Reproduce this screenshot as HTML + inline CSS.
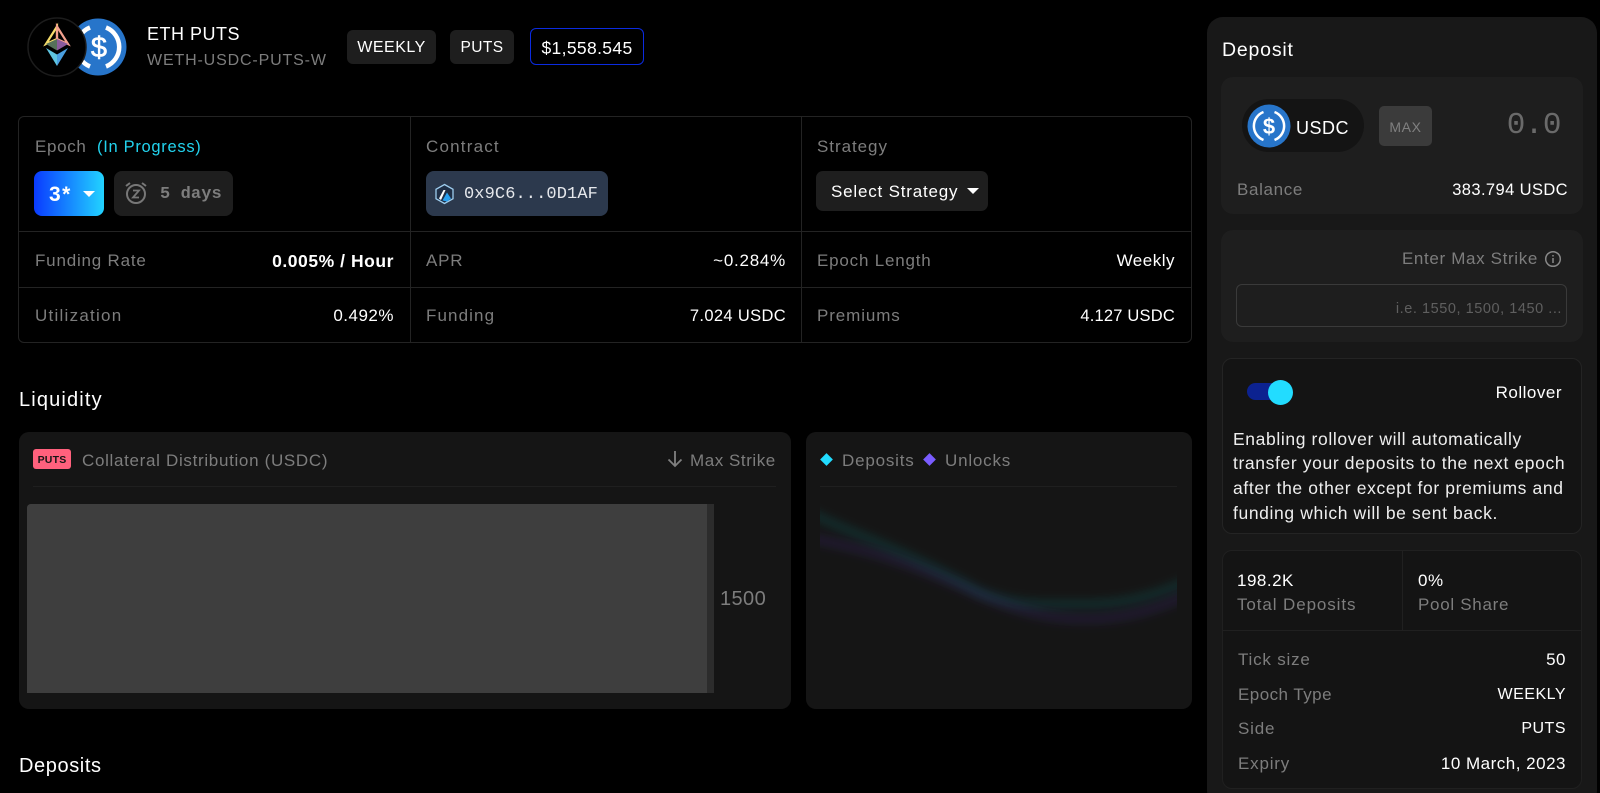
<!DOCTYPE html>
<html><head><meta charset="utf-8"><style>
*{box-sizing:border-box}
html,body{margin:0;padding:0;background:#000;width:1600px;height:793px;overflow:hidden}
body{position:relative;font-family:"Liberation Sans",sans-serif;color:#fff}
.t{position:absolute;white-space:nowrap;line-height:20px;height:20px;margin-top:-9px;font-size:17px;letter-spacing:.5px}
.g{color:#7d7d7d;font-size:17px;letter-spacing:.8px}
.u{font-size:16px;letter-spacing:.5px}
.r{text-align:right}
.b{position:absolute}
.m{font-family:"Liberation Mono",monospace}
</style></head><body>

<!-- header -->
<svg class="b" style="left:25px;top:15px" width="104" height="64" viewBox="0 0 104 64">
<circle cx="73" cy="32" r="28.5" fill="#2775ca"/>
<path d="M65 12.500A21 21 0 0 0 65 51.500" fill="none" stroke="#fff" stroke-width="4.500"/>
<path d="M81 12.500A21 21 0 0 1 81 51.500" fill="none" stroke="#fff" stroke-width="4.500"/>
<text x="74" y="42" font-family="Liberation Sans" font-size="29" fill="#fff" stroke="#fff" stroke-width=".6" text-anchor="middle">$</text>
<circle cx="32" cy="32" r="29" fill="#000" stroke="#1c1c1c" stroke-width="1.5"/>
<path d="M32 11.500L21 29L32 24Z" fill="none" stroke="#f5dc6a" stroke-width="2.200"/>
<path d="M32 11.500L43 29L32 24Z" fill="none" stroke="#f2a08e" stroke-width="2.200"/>
<path d="M32 24L43 29L32 35.500Z" fill="#8a5a9c"/>
<path d="M32 24L21 29L32 35.500Z" fill="#55705a"/>
<path d="M21 33L32 39.500L32 51Z" fill="#5ec5e0"/>
<path d="M43 33L32 39.500L32 51Z" fill="#4a9fe0"/>
</svg>
<div class="t" style="left:147px;top:33px;font-size:18px;letter-spacing:.5px">ETH PUTS</div>
<div class="t g" style="left:147px;top:60px;font-size:16px;letter-spacing:.85px">WETH-USDC-PUTS-W</div>
<div class="b" style="left:347px;top:30px;width:89px;height:34px;background:#1e1e1e;border-radius:6px"></div>
<div class="t" style="left:347px;width:89px;text-align:center;top:46.500px;font-size:16px;letter-spacing:.5px">WEEKLY</div>
<div class="b" style="left:450px;top:30px;width:64px;height:34px;background:#1e1e1e;border-radius:6px"></div>
<div class="t" style="left:450px;width:64px;text-align:center;top:46.500px;font-size:15.500px;letter-spacing:.4px">PUTS</div>
<div class="b" style="left:530px;top:28px;width:114px;height:37px;border:1.500px solid #0b2be0;border-radius:6px"></div>
<div class="t" style="left:530px;width:114px;text-align:center;top:46.500px;font-size:17.500px;letter-spacing:.35px">$1,558.545</div>

<!-- stats table -->
<div class="b" style="left:18px;top:116px;width:1174px;height:227px;border:1px solid #232323;border-radius:6px"></div>
<div class="b" style="left:410px;top:116px;width:1px;height:227px;background:#232323"></div>
<div class="b" style="left:801px;top:116px;width:1px;height:227px;background:#232323"></div>
<div class="b" style="left:18px;top:231px;width:1174px;height:1px;background:#232323"></div>
<div class="b" style="left:18px;top:287px;width:1174px;height:1px;background:#232323"></div>

<div class="t g" style="left:35px;top:146px;letter-spacing:.65px">Epoch</div>
<div class="t" style="left:97px;top:146px;color:#22d3ee;font-size:16.500px;letter-spacing:.7px">(In Progress)</div>
<div class="t g" style="left:426px;top:146px;letter-spacing:1.2px">Contract</div>
<div class="t g" style="left:817px;top:146px;letter-spacing:.95px">Strategy</div>

<div class="b" style="left:34px;top:171px;width:70px;height:45px;border-radius:8px;background:linear-gradient(90deg,#0a3bff,#22d3ff)"></div>
<div class="t" style="left:49px;top:194px;font-size:21px;font-weight:700;letter-spacing:1.5px">3*</div>
<div class="b" style="left:83px;top:191px;width:0;height:0;border-left:6px solid transparent;border-right:6px solid transparent;border-top:6.500px solid #fff"></div>
<div class="b" style="left:114px;top:171px;width:119px;height:45px;border-radius:8px;background:#1e1e1e"></div>
<svg class="b" style="left:124px;top:180px" width="24" height="26" viewBox="0 0 24 26" fill="none" stroke="#777" stroke-width="2">
<circle cx="12" cy="14" r="9"/><path d="M2 6L6 3M22 6L18 3"/><path d="M9 10.500H15L9 17.500H15" stroke-width="1.800"/></svg>
<div class="t m g" style="left:160px;top:194px;font-size:17px;letter-spacing:.1px;font-weight:700">5 days</div>

<div class="b" style="left:426px;top:171px;width:182px;height:45px;border-radius:8px;background:#2c394d"></div>
<svg class="b" style="left:434px;top:183px" width="21" height="22" viewBox="0 0 21 22">
<path d="M10.500 1.500L19 6.300V15.700L10.500 20.500L2 15.700V6.300Z" fill="#1f2f46" stroke="#9dcced" stroke-width="1.300"/>
<path d="M5 15.500L9.500 7H11.500L7 17Z" fill="#fff"/><path d="M8.500 17.500L13 9.500L17 15.500L13 18.500Z" fill="#28a0f0"/></svg>
<div class="t m" style="left:464px;top:194px;font-size:17px;letter-spacing:.1px;color:#e6e8ec">0x9C6...0D1AF</div>

<div class="b" style="left:816px;top:171px;width:172px;height:40px;border-radius:7px;background:#1e1e1e"></div>
<div class="t" style="left:831px;top:191px;font-size:17px;letter-spacing:.8px">Select Strategy</div>
<div class="b" style="left:967px;top:188px;width:0;height:0;border-left:6px solid transparent;border-right:6px solid transparent;border-top:6.500px solid #fff"></div>

<div class="t g" style="left:35px;top:260px">Funding Rate</div>
<div class="t r" style="right:1206px;top:260px;font-weight:700;font-size:17.500px;letter-spacing:.55px">0.005% / Hour</div>
<div class="t g" style="left:426px;top:260px">APR</div>
<div class="t r" style="right:814px;top:260px;letter-spacing:.75px">~0.284%</div>
<div class="t g" style="left:817px;top:260px">Epoch Length</div>
<div class="t r" style="right:425px;top:260px">Weekly</div>
<div class="t g" style="left:35px;top:315px;letter-spacing:1.25px">Utilization</div>
<div class="t r" style="right:1206px;top:315px">0.492%</div>
<div class="t g" style="left:426px;top:315px;letter-spacing:1.1px">Funding</div>
<div class="t r" style="right:814px;top:315px;font-size:16.500px;letter-spacing:.35px">7.024 USDC</div>
<div class="t g" style="left:817px;top:315px;letter-spacing:.9px">Premiums</div>
<div class="t r" style="right:425px;top:315px;font-size:16.500px;letter-spacing:.2px">4.127 USDC</div>

<!-- liquidity -->
<div class="t" style="left:19px;top:399px;font-size:20px;letter-spacing:1.15px">Liquidity</div>
<div class="b" style="left:19px;top:432px;width:772px;height:277px;background:#151515;border-radius:10px"></div>
<div class="b" style="left:33px;top:449px;width:38px;height:20px;background:#ff617d;border-radius:3px"></div>
<div class="t" style="left:33px;width:38px;text-align:center;top:458.500px;font-size:10.500px;font-weight:700;color:#151515;letter-spacing:.2px">PUTS</div>
<div class="t g" style="left:82px;top:460px;letter-spacing:.68px">Collateral Distribution (USDC)</div>
<svg class="b" style="left:666px;top:449px" width="18" height="20" viewBox="0 0 18 20" fill="none" stroke="#808080" stroke-width="1.800"><path d="M9 2V17M2.500 10.500L9 17L15.500 10.500"/></svg>
<div class="t g" style="left:690px;top:460px;letter-spacing:.55px">Max Strike</div>
<div class="b" style="left:33px;top:486px;width:743px;height:1px;background:#1f1f1f"></div>
<div class="b" style="left:27px;top:504px;width:687px;height:189px;background:#2c2c2c;border-radius:4px 0 0 0"></div>
<div class="b" style="left:27px;top:504px;width:680px;height:189px;background:#3e3e3e;border-radius:4px 0 0 0"></div>
<div class="t g" style="left:720px;top:598px;font-size:20px;letter-spacing:.4px">1500</div>

<div class="b" style="left:806px;top:432px;width:386px;height:277px;background:#151515;border-radius:10px"></div>
<div class="b" style="left:821.500px;top:454.500px;width:9px;height:9px;background:#22dcff;transform:rotate(45deg)"></div>
<div class="t g" style="left:842px;top:460px">Deposits</div>
<div class="b" style="left:924.500px;top:454.500px;width:9px;height:9px;background:#7a5cff;transform:rotate(45deg)"></div>
<div class="t g" style="left:945px;top:460px">Unlocks</div>
<div class="b" style="left:820px;top:486px;width:357px;height:1px;background:#1f1f1f"></div>
<svg class="b" style="left:820px;top:495px" width="357" height="140" viewBox="820 495 357 140">
<defs><filter id="bl" x="-10%" y="-30%" width="120%" height="160%"><feGaussianBlur stdDeviation="4.500"/></filter></defs>
<path d="M810 513C850 533 900 548 980 592C1020 607 1040 604 1090 604C1120 604 1150 598 1190 580" fill="none" stroke="#1fe0e0" stroke-opacity=".1" stroke-width="10" filter="url(#bl)"/>
<path d="M810 538C860 548 900 558 980 595C1020 612 1050 619 1085 619C1120 619 1150 612 1190 594" fill="none" stroke="#7a4cff" stroke-opacity=".11" stroke-width="10" filter="url(#bl)"/>
</svg>

<div class="t" style="left:19px;top:765px;font-size:20px;letter-spacing:.6px">Deposits</div>

<!-- right panel -->
<div class="b" style="left:1207px;top:17px;width:390px;height:790px;background:#181818;border-radius:16px"></div>
<div class="t" style="left:1222px;top:49px;font-size:19.500px;letter-spacing:.8px">Deposit</div>
<div class="b" style="left:1221px;top:77px;width:362px;height:137px;background:#1e1e1e;border-radius:12px"></div>
<div class="b" style="left:1242px;top:99px;width:122px;height:53px;background:#141414;border-radius:27px"></div>
<svg class="b" style="left:1247px;top:104px" width="44" height="44" viewBox="0 0 44 44">
<circle cx="22" cy="22" r="21.500" fill="#2775ca"/>
<path d="M16.500 8A15 15 0 0 0 16.500 36" fill="none" stroke="#fff" stroke-width="2.500"/>
<path d="M27.500 8A15 15 0 0 1 27.500 36" fill="none" stroke="#fff" stroke-width="2.500"/>
<text x="22" y="30" font-family="Liberation Sans" font-size="22" font-weight="700" fill="#fff" text-anchor="middle">$</text>
</svg>
<div class="t" style="left:1296px;top:127px;font-size:18px;letter-spacing:.5px">USDC</div>
<div class="b" style="left:1379px;top:106px;width:53px;height:40px;background:#3b3b3b;border-radius:5px"></div>
<div class="t" style="left:1379px;width:53px;text-align:center;top:126px;font-size:14px;color:#808080;letter-spacing:.6px">MAX</div>
<div class="t m r" style="right:39px;top:126px;font-size:31px;letter-spacing:-.5px;color:#6a6a6a;height:30px;line-height:30px;margin-top:-15px">0.0</div>
<div class="t g" style="left:1237px;top:189px;letter-spacing:.65px">Balance</div>
<div class="t r" style="right:32px;top:189px;font-size:16.500px;letter-spacing:.4px">383.794 USDC</div>

<div class="b" style="left:1221px;top:230px;width:362px;height:112px;background:#1e1e1e;border-radius:12px"></div>
<div class="t g" style="right:62px;top:258px;letter-spacing:.65px">Enter Max Strike</div>
<svg class="b" style="left:1544px;top:250px" width="18" height="18" viewBox="0 0 18 18" fill="none" stroke="#888" stroke-width="1.500"><circle cx="9" cy="9" r="7.300"/><path d="M9 8V13M9 5V6.500"/></svg>
<div class="b" style="left:1236px;top:284px;width:331px;height:43px;border:1.500px solid #3a3a3a;border-radius:6px"></div>
<div class="t r" style="right:38px;top:308px;font-size:14.500px;color:#5f5f5f;letter-spacing:.55px">i.e. 1550, 1500, 1450 ...</div>

<div class="b" style="left:1222px;top:358px;width:360px;height:176px;background:#141414;border:1px solid #242424;border-radius:10px"></div>
<div class="b" style="left:1247px;top:383px;width:32px;height:17px;background:#0c2290;border-radius:9px"></div>
<div class="b" style="left:1268px;top:380px;width:25px;height:25px;background:#22dcff;border-radius:50%"></div>
<div class="t r" style="right:38px;top:392px">Rollover</div>
<div class="t" style="left:1233px;top:437.500px;font-size:17.500px;letter-spacing:.62px;color:#eee">Enabling rollover will automatically</div>
<div class="t" style="left:1233px;top:462px;font-size:17.500px;letter-spacing:.62px;color:#eee">transfer your deposits to the next epoch</div>
<div class="t" style="left:1233px;top:486.500px;font-size:17.500px;letter-spacing:.62px;color:#eee">after the other except for premiums and</div>
<div class="t" style="left:1233px;top:511.500px;font-size:17.500px;letter-spacing:.62px;color:#eee">funding which will be sent back.</div>

<div class="b" style="left:1222px;top:550px;width:360px;height:239px;background:#141414;border:1px solid #202020;border-radius:10px"></div>
<div class="b" style="left:1402px;top:550px;width:1px;height:80px;background:#202020"></div>
<div class="b" style="left:1222px;top:630px;width:360px;height:1px;background:#202020"></div>
<div class="t" style="left:1237px;top:580px">198.2K</div>
<div class="t g" style="left:1237px;top:604px;letter-spacing:.9px">Total Deposits</div>
<div class="t" style="left:1418px;top:580px">0%</div>
<div class="t g" style="left:1418px;top:604px;letter-spacing:.7px">Pool Share</div>
<div class="t g" style="left:1238px;top:659px">Tick size</div>
<div class="t r" style="right:34px;top:659px">50</div>
<div class="t g" style="left:1238px;top:693.500px;letter-spacing:.45px">Epoch Type</div>
<div class="t r u" style="right:34px;top:693.500px">WEEKLY</div>
<div class="t g" style="left:1238px;top:728px">Side</div>
<div class="t r u" style="right:34px;top:728px">PUTS</div>
<div class="t g" style="left:1238px;top:762.500px">Expiry</div>
<div class="t r" style="right:34px;top:762.500px">10 March, 2023</div>
</body></html>
